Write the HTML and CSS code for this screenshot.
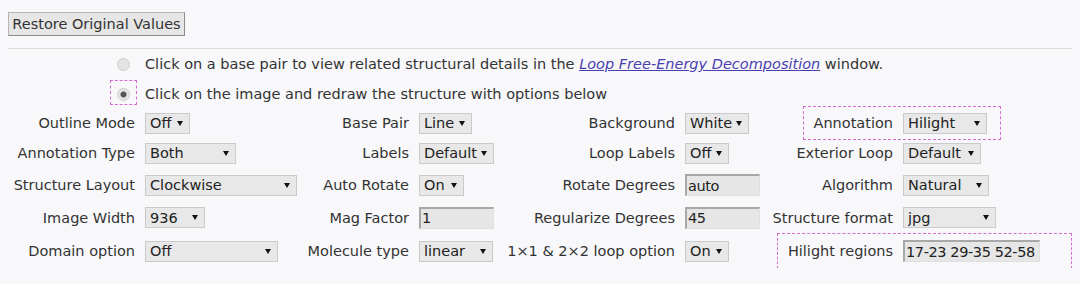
FILE: index.html
```html
<!DOCTYPE html>
<html lang="en">
<head>
<meta charset="UTF-8" />
<title>Structure Drawing Options</title>
<link rel="stylesheet" href="styles.css">
</head>
<body>

<button class="restore" type="button">Restore Original Values</button>
<hr />

<div class="modes">
  <label class="mode">
    <span class="radio-cell"><input type="radio" name="mode" /></span>
    <span>Click on a base pair to view related structural details in the <a href="#">Loop Free-Energy Decomposition</a> window.</span>
  </label>
  <label class="mode">
    <span class="radio-cell marked"><input type="radio" name="mode" checked /></span>
    <span>Click on the image and redraw the structure with options below</span>
  </label>
</div>

<div class="options">
  <!-- row 1 -->
  <div class="lbl">Outline Mode</div>
  <div><span class="sel w45"><select><option>Off</option></select></span></div>
  <div class="lbl">Base Pair</div>
  <div><span class="sel w53"><select><option>Line</option></select></span></div>
  <div class="lbl">Background</div>
  <div><span class="sel w64"><select><option>White</option></select></span></div>
  <div class="pair marked-annot">
    <span class="plbl">Annotation</span>
    <span class="sel w84"><select><option>Hilight</option></select></span>
  </div>

  <!-- row 2 -->
  <div class="lbl">Annotation Type</div>
  <div><span class="sel w91"><select><option>Both</option></select></span></div>
  <div class="lbl">Labels</div>
  <div><span class="sel w75"><select><option>Default</option></select></span></div>
  <div class="lbl">Loop Labels</div>
  <div><span class="sel w44"><select><option>Off</option></select></span></div>
  <div class="pair">
    <span class="plbl">Exterior Loop</span>
    <span class="sel w78"><select><option>Default</option></select></span>
  </div>

  <!-- row 3 -->
  <div class="lbl">Structure Layout</div>
  <div><span class="sel w152"><select><option>Clockwise</option></select></span></div>
  <div class="lbl">Auto Rotate</div>
  <div><span class="sel w45"><select><option>On</option></select></span></div>
  <div class="lbl">Rotate Degrees</div>
  <div><input class="txt w75" type="text" value="auto" /></div>
  <div class="pair">
    <span class="plbl">Algorithm</span>
    <span class="sel w86"><select><option>Natural</option></select></span>
  </div>

  <!-- row 4 -->
  <div class="lbl">Image Width</div>
  <div><span class="sel w60"><select><option>936</option></select></span></div>
  <div class="lbl">Mag Factor</div>
  <div><input class="txt w75" type="text" value="1" /></div>
  <div class="lbl">Regularize Degrees</div>
  <div><input class="txt w75" type="text" value="45" /></div>
  <div class="pair">
    <span class="plbl">Structure format</span>
    <span class="sel w93"><select><option>jpg</option></select></span>
  </div>

  <!-- row 5 -->
  <div class="lbl">Domain option</div>
  <div><span class="sel w133"><select><option>Off</option></select></span></div>
  <div class="lbl">Molecule type</div>
  <div><span class="sel w74"><select><option>linear</option></select></span></div>
  <div class="lbl">1&times;1 &amp; 2&times;2 loop option</div>
  <div><span class="sel w44"><select><option>On</option></select></span></div>
  <div class="pair marked-regions">
    <span class="plbl">Hilight regions</span>
    <input class="txt w137" type="text" value="17-23 29-35 52-58" />
  </div>
</div>

</body>
</html>
```

FILE: styles.css
```css
body {
  margin: 8px;
  background: #f8f8fa;
  color: #333;
  font-family: "DejaVu Sans", Verdana, sans-serif;
  font-size: 14.5px;
}

.restore {
  display: block;
  margin: 4px 0 0;
  height: 24px;
  width: 177px;
  padding: 0;
  font: inherit;
  color: #333;
  background: #e6e6e6;
  border: 1px solid #b4b4b4;
  border-right-color: #8c8c8c;
  border-bottom-color: #8c8c8c;
}

hr {
  margin: 12px 0 0;
  border: 0;
  border-top: 1px solid #dadada;
}

.mode {
  display: flex;
  align-items: center;
  height: 30px;
}
.radio-cell {
  position: relative;
  width: 137px;
  display: flex;
  justify-content: flex-end;
  padding-right: 15px;
  box-sizing: border-box;
}
.radio-cell input {
  appearance: none;
  margin: 0;
  width: 13px;
  height: 13px;
  border-radius: 50%;
  border: 1px solid #cfcfcf;
  background: #e4e4e4;
  box-sizing: border-box;
}
.radio-cell input:checked {
  background: radial-gradient(circle, #555 0 2.5px, #e4e4e4 3.5px);
}
.radio-cell.marked::after {
  content: "";
  position: absolute;
  right: 8px;
  top: -8px;
  width: 25px;
  height: 23px;
  border: 1px dashed #d46cd4;
}
.mode a {
  color: #4a3fae;
  font-style: italic;
}

.options {
  display: grid;
  grid-template-columns: 137px 155px 119px 141px 125px 85px 1fr;
  grid-template-rows: 28px 32px 32px 33px 34px;
  align-items: center;
}
.lbl {
  display: flex;
  justify-content: flex-end;
  white-space: nowrap;
  padding-right: 10px;
}

.sel {
  position: relative;
  display: inline-block;
  vertical-align: middle;
}
.sel select {
  appearance: none;
  width: 100%;
  height: 21px;
  margin: 0;
  padding: 0 0 0 4px;
  font: inherit;
  color: #222;
  background: #e8e8e8;
  border: 1px solid #cacaca;
  border-radius: 0;
}
.sel::after {
  content: "";
  position: absolute;
  right: 7px;
  top: 8px;
  border-left: 3px solid transparent;
  border-right: 3px solid transparent;
  border-top: 5px solid #111;
  pointer-events: none;
}

.txt {
  height: 22px;
  margin: 0;
  padding: 0 0 0 1px;
  box-sizing: border-box;
  font: inherit;
  letter-spacing: -0.4px;
  color: #222;
  background: #e6e6e6;
  border: 1px solid #e0e0e0;
  border-top: 2px solid #a8a8a8;
  border-left: 2px solid #a8a8a8;
  vertical-align: middle;
}

.pair {
  position: relative;
  display: flex;
  align-items: center;
  white-space: nowrap;
}
.plbl {
  width: 123px;
  margin-right: 10px;
  text-align: right;
}
.marked-annot::after {
  content: "";
  position: absolute;
  left: 33px;
  top: -7px;
  width: 196px;
  height: 32px;
  border: 1px dashed #d46cd4;
  pointer-events: none;
}
.marked-regions::after {
  content: "";
  position: absolute;
  left: 7px;
  top: -7px;
  width: 293px;
  height: 34px;
  border: 1px dashed #d46cd4;
  pointer-events: none;
}

.w44 { width: 44px; }
.w45 { width: 45px; }
.w53 { width: 53px; }
.w60 { width: 60px; }
.w64 { width: 64px; }
.w74 { width: 74px; }
.w75 { width: 75px; }
.w78 { width: 78px; }
.w84 { width: 84px; }
.w86 { width: 86px; }
.w91 { width: 91px; }
.w93 { width: 93px; }
.w133 { width: 133px; }
.w137 { width: 137px; }
.w152 { width: 152px; }
```
